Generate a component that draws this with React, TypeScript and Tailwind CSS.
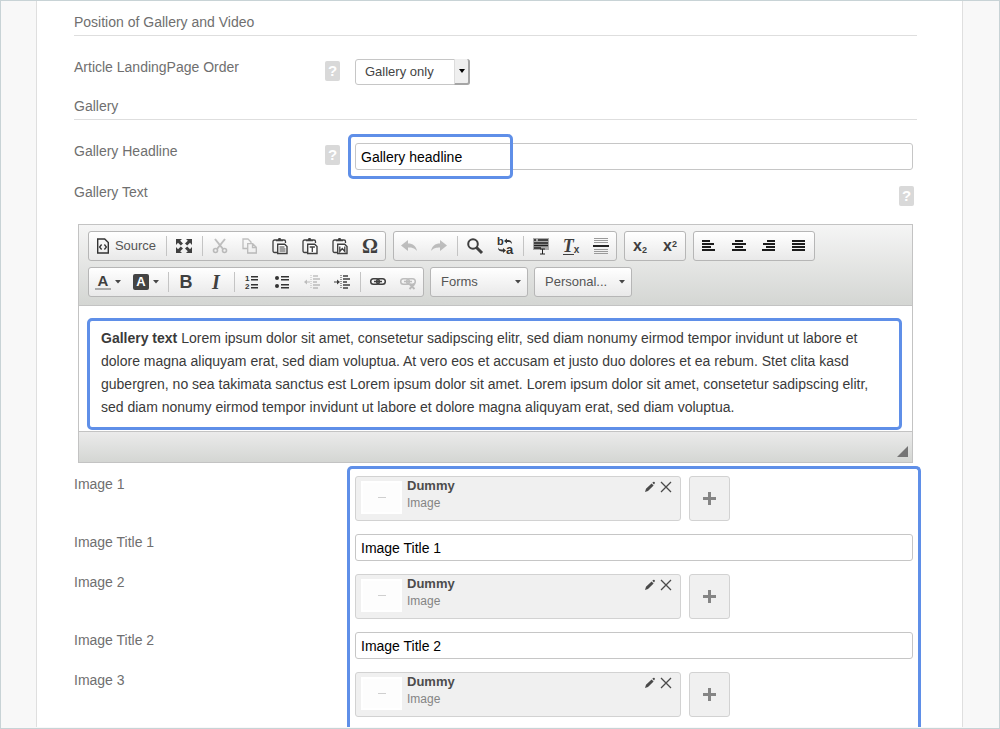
// src/App.tsx
import type { ReactNode } from 'react';

interface ToolButtonProps {
  label: string;
  children: ReactNode;
  disabled?: boolean;
  className?: string;
}

function ToolButton({ label, children, disabled, className = 'w-[30px]' }: ToolButtonProps) {
  return (
    <button
      type="button"
      title={label}
      aria-label={label}
      disabled={disabled}
      className={`flex h-7 shrink-0 items-center justify-center text-[#3f3f3f] disabled:opacity-30 ${className}`}
    >
      {children}
    </button>
  );
}

function ToolGroup({ children }: { children: ReactNode }) {
  return (
    <div className="flex rounded-[3px] border border-[#b6b6b6] bg-linear-to-b from-white to-[#e9e9e9]">
      {children}
    </div>
  );
}

function Separator() {
  return (
    <span className="flex w-[6px] items-center justify-center">
      <span className="h-5 w-px bg-[#c4c4c4]" />
    </span>
  );
}

function Icon({ children }: { children: ReactNode }) {
  return (
    <svg width="18" height="18" viewBox="0 0 18 18" fill="none" stroke="currentColor" aria-hidden="true">
      {children}
    </svg>
  );
}

function Caret() {
  return (
    <svg width="6" height="4" viewBox="0 0 6 4" fill="#474747" aria-hidden="true">
      <path d="M0 0h6L3 3.5z" />
    </svg>
  );
}

// Clipboard shared by the three paste buttons
function Clipboard({ children }: { children: ReactNode }) {
  return (
    <Icon>
      <path d="M6 15.500H3.500a1.500 1.500 0 0 1-1.500-1.500V4.500A1.500 1.500 0 0 1 3.500 3H5M12 3h1a1.500 1.500 0 0 1 1.500 1.500V6" strokeWidth="1.300" />
      <path d="M5 2.200h2L7.500 1h2L10 2.200h2v2H5z" fill="currentColor" stroke="none" />
      <path d="M6.700 7.200h7l2.300 2.300v7H6.700z" fill="#fff" strokeWidth="1.400" />
      {children}
    </Icon>
  );
}

type Bar = [number, number];

function AlignIcon({ bars }: { bars: Bar[] }) {
  return (
    <svg width="14" height="14" viewBox="0 0 14 14" fill="#1c1c1c" aria-hidden="true">
      {bars.map(([x, width], i) => (
        <rect key={i} x={x} y={1 + i * 3} width={width} height="2" />
      ))}
    </svg>
  );
}

const alignments: { label: string; bars: Bar[] }[] = [
  { label: 'Align Left', bars: [[0, 8], [0, 12], [0, 9], [0, 13]] },
  { label: 'Center', bars: [[3, 8], [0, 14], [3, 8], [0, 14]] },
  { label: 'Align Right', bars: [[5, 8], [1, 12], [4, 9], [0, 13]] },
  { label: 'Justify', bars: [[0, 13], [0, 13], [0, 13], [0, 13]] },
];

function IndentIcon({ outdent = false }: { outdent?: boolean }) {
  return (
    <Icon>
      <path d="M10 3h5M10 6h7M10 9h4M10 12h7M10 15h5" strokeWidth="1.500" />
      <path d="M8 2v14" strokeDasharray="1 1" />
      {outdent ? (
        <path d="M1 9l3-2.500v2h3v1H4v2z" fill="currentColor" stroke="none" />
      ) : (
        <path d="M7 9L4 6.500v2H1v1h3v2z" fill="currentColor" stroke="none" />
      )}
    </Icon>
  );
}

function LinkIcon({ broken = false }: { broken?: boolean }) {
  return (
    <Icon>
      <rect x="1.700" y="5.700" width="8.600" height="5.600" rx="2.800" strokeWidth="1.500" />
      <rect x="7.700" y="5.700" width="8.600" height="5.600" rx="2.800" strokeWidth="1.500" />
      <path d="M5 8.500h8" strokeWidth="1.500" />
      {broken && <path d="M10.500 11l5 5M15.500 11l-5 5" strokeWidth="1.800" />}
    </Icon>
  );
}

function Toolbar() {
  return (
    <div className="flex flex-col gap-[6px] border-b border-[#c3c3c3] bg-linear-to-b from-[#f5f5f5] to-[#d4d6d3] px-[9px] pt-[6px] pb-2">
      <div className="flex flex-wrap gap-[7px]">
        <ToolGroup>
          <ToolButton label="Source" className="w-[74px] gap-[5px]">
            <svg width="14" height="16" viewBox="0 0 14 16" fill="none" stroke="#333" aria-hidden="true">
              <path d="M1.700 1h7l3.600 3.600V15H1.700z" strokeWidth="1.400" />
              <path d="M5.600 6.500L3.600 9l2 2.500M8.400 6.500l2 2.500-2 2.500" strokeWidth="1.300" />
            </svg>
            <span className="text-[13px] text-[#555]">Source</span>
          </ToolButton>
          <Separator />
          <ToolButton label="Maximize">
            <Icon>
              <path d="M1 2h6L5.200 3.800 8 6.500 5.800 8.500 3 5.800 1 8zM17 2v6l-2-2.200-2.800 2.700L10 6.500l2.800-2.700L11 2zM1 16v-6l2 2.200 2.800-2.700L8 11.500l-2.800 2.700L7 16zM17 16h-6l1.800-1.800L10 11.500l2.200-2 2.800 2.700 2-2.200z" fill="currentColor" stroke="none" />
            </Icon>
          </ToolButton>
          <Separator />
          <ToolButton label="Cut" disabled>
            <Icon>
              <path d="M4 2l8 10M14 2L6 12" strokeWidth="2" />
              <circle cx="4.500" cy="13.500" r="2" strokeWidth="1.600" />
              <circle cx="13.500" cy="13.500" r="2" strokeWidth="1.600" />
            </Icon>
          </ToolButton>
          <ToolButton label="Copy" disabled>
            <Icon>
              <path d="M6 11.500H2V2h5l3 3v1" strokeWidth="1.300" />
              <path d="M6.700 6.700h5l3.600 3.600V16H6.700zM11.500 7v3.500H15" strokeWidth="1.300" />
            </Icon>
          </ToolButton>
          <ToolButton label="Paste">
            <Clipboard>
              <path d="M8.500 10h5M8.500 12h6M8.500 14h6" />
            </Clipboard>
          </ToolButton>
          <ToolButton label="Paste as plain text">
            <Clipboard>
              <path d="M8.700 10h5.200M11.300 10v5" strokeWidth="1.300" />
            </Clipboard>
          </ToolButton>
          <ToolButton label="Paste from Word">
            <Clipboard>
              <path d="M8.800 9.500v5l2.500-3 2.500 3v-5" strokeWidth="1.300" />
            </Clipboard>
          </ToolButton>
          <ToolButton label="Insert Special Character">
            <span className="font-['Liberation_Serif',serif] text-xl leading-5 font-bold">Ω</span>
          </ToolButton>
        </ToolGroup>

        <ToolGroup>
          <ToolButton label="Undo" disabled>
            <Icon>
              <path d="M1 8.500L8 3v3.500c5 0 8 2.500 9 7.500-2.500-3-5-3.500-9-3.500V14z" fill="currentColor" stroke="none" />
            </Icon>
          </ToolButton>
          <ToolButton label="Redo" disabled>
            <Icon>
              <path d="M17 8.500L10 3v3.500c-5 0-8 2.500-9 7.500 2.500-3 5-3.500 9-3.500V14z" fill="currentColor" stroke="none" />
            </Icon>
          </ToolButton>
          <Separator />
          <ToolButton label="Find">
            <Icon>
              <circle cx="7" cy="7" r="4.800" strokeWidth="2" />
              <path d="M10.500 10.500l5.500 5.500" strokeWidth="3" />
            </Icon>
          </ToolButton>
          <ToolButton label="Replace">
            <svg width="20" height="20" viewBox="0 0 20 20" fill="#333" fontFamily="Liberation Sans, sans-serif" fontWeight="bold" aria-hidden="true">
              <text x="2" y="9" fontSize="11">b</text>
              <text x="11" y="18" fontSize="13">a</text>
              <path d="M9 5l3-2.500V4c3 0 5 1 5 4-1.500-2-2.500-2-5-2v1.500zM11 14.500L8 12v1.500c-2.500 0-4 0-5-2 0 3 2 4 5 4V17z" />
            </svg>
          </ToolButton>
          <Separator />
          <ToolButton label="Select All">
            <Icon>
              <path d="M1 1h16v12H1z" fill="#aaa" stroke="none" />
              <path d="M2 3h2M6 3h10M2 6h14M2 8.500h14M2 11h7" stroke="#222" strokeWidth="1.600" />
              <path d="M8 12h5M8 17h5M10.500 12v5" stroke="#222" />
            </Icon>
          </ToolButton>
          <ToolButton label="Remove Format">
            <span className="flex items-end font-bold">
              <span className="border-b border-current font-['Liberation_Serif',serif] text-lg leading-4 italic">T</span>
              <span className="text-[10px] leading-[10px]">x</span>
            </span>
          </ToolButton>
          <ToolButton label="Insert Horizontal Line">
            <Icon>
              <path d="M2 1.500h14M2 3.500h14M2 5.500h14M2 12.500h14M2 14.500h14M2 16.500h14" stroke="#9a9a9a" />
              <path d="M1 9h16" stroke="#222" strokeWidth="2" />
            </Icon>
          </ToolButton>
        </ToolGroup>

        <ToolGroup>
          <ToolButton label="Subscript">
            <span className="text-base font-bold">
              x<sub className="text-[9px]">2</sub>
            </span>
          </ToolButton>
          <ToolButton label="Superscript">
            <span className="text-base font-bold">
              x<sup className="text-[9px]">2</sup>
            </span>
          </ToolButton>
        </ToolGroup>

        <ToolGroup>
          {alignments.map(({ label, bars }) => (
            <ToolButton key={label} label={label}>
              <AlignIcon bars={bars} />
            </ToolButton>
          ))}
        </ToolGroup>
      </div>

      <div className="flex flex-wrap gap-[6px]">
        <ToolGroup>
          <ToolButton label="Text Color" className="w-[38px] gap-1">
            <span className="w-4 border-b-2 border-[#aaa] text-center text-[15px] leading-[14px] font-bold">A</span>
            <Caret />
          </ToolButton>
          <ToolButton label="Background Color" className="w-[38px] gap-1">
            <span className="w-4 rounded-xs bg-[#444] text-center text-[13px] leading-4 font-bold text-white">A</span>
            <Caret />
          </ToolButton>
          <Separator />
          <ToolButton label="Bold">
            <span className="text-lg font-bold">B</span>
          </ToolButton>
          <ToolButton label="Italic">
            <span className="font-['Liberation_Serif',serif] text-xl font-bold italic">I</span>
          </ToolButton>
          <Separator />
          <ToolButton label="Numbered List">
            <svg width="18" height="18" viewBox="0 0 18 18" fill="#333" fontFamily="Liberation Sans, sans-serif" fontSize="8" fontWeight="bold" aria-hidden="true">
              <text x="2" y="8">1</text>
              <text x="2" y="16">2</text>
              <path d="M8 3h7v1.500H8zM8 6h7v1.500H8zM8 11h7v1.500H8zM8 14h7v1.500H8z" />
            </svg>
          </ToolButton>
          <ToolButton label="Bulleted List">
            <svg width="18" height="18" viewBox="0 0 18 18" fill="#333" aria-hidden="true">
              <circle cx="4" cy="5" r="2" />
              <circle cx="4" cy="13" r="2" />
              <path d="M8 3h8v1.500H8zM8 6h8v1.500H8zM8 11h8v1.500H8zM8 14h8v1.500H8z" />
            </svg>
          </ToolButton>
          <ToolButton label="Decrease Indent" disabled>
            <IndentIcon outdent />
          </ToolButton>
          <ToolButton label="Increase Indent">
            <IndentIcon />
          </ToolButton>
          <Separator />
          <ToolButton label="Link">
            <LinkIcon />
          </ToolButton>
          <ToolButton label="Unlink" disabled>
            <LinkIcon broken />
          </ToolButton>
        </ToolGroup>

        {['Forms', 'Personal...'].map((name) => (
          <ToolGroup key={name}>
            <button type="button" className="flex h-7 w-24 items-center justify-between pr-[6px] pl-[10px] text-[13px] text-[#555]">
              {name}
              <Caret />
            </button>
          </ToolGroup>
        ))}
      </div>
    </div>
  );
}

function HelpButton() {
  return (
    <button
      type="button"
      aria-label="Help"
      className="h-5 w-[15px] shrink-0 rounded-xs bg-[#d9d9d9] text-center text-[15px] leading-5 font-bold text-white"
    >
      ?
    </button>
  );
}

function SectionTitle({ children }: { children: ReactNode }) {
  return <h2 className="border-b border-[#dedede] pb-1 text-sm leading-[17px]">{children}</h2>;
}

interface FieldRowProps {
  id: string;
  label: string;
  help?: boolean;
  children: ReactNode;
}

function FieldRow({ id, label, help, children }: FieldRowProps) {
  return (
    <div className="flex pr-1">
      <div className="flex w-[281px] shrink-0 items-start justify-between pr-[15px]">
        <label htmlFor={id} className="text-sm leading-[17px]">
          {label}
        </label>
        {help && (
          <span className="flex pt-[2px]">
            <HelpButton />
          </span>
        )}
      </div>
      {children}
    </div>
  );
}

function TextInput({ id, value }: { id: string; value: string }) {
  return (
    <input
      id={id}
      type="text"
      defaultValue={value}
      className="h-[27px] w-full min-w-0 rounded-[3px] border border-[#c6c6c6] bg-white px-[5px] text-sm text-black outline-none"
    />
  );
}

function ImageCard({ id }: { id: string }) {
  return (
    <div className="flex h-[45px] min-w-0 gap-2">
      <div className="flex w-[326px] rounded-[3px] border border-[#d2d2d2] bg-[#f0f0f0] pt-1 pr-2 pl-[5px]">
        {/* Thumbnail */}
        <div className="flex h-[33px] w-[41px] items-center justify-center border-2 border-white bg-[#fdfdfd]">
          <span className="h-px w-2 bg-[#cfcfcf]" />
        </div>
        <div className="-mt-1 flex-1 pl-[5px]">
          <p className="text-[13px] leading-[17px] font-bold text-[#4c4c4c]">Dummy</p>
          <p className="text-xs leading-[19px] text-[#848484]">Image</p>
        </div>
        <div className="flex h-3 gap-1">
          <button type="button" aria-label="Edit">
            <svg width="12" height="12" viewBox="0 0 12 12" fill="#4a4a4a" aria-hidden="true">
              <path d="M1 11l1-3.200 5.600-5.400 2 2L4 10zM8.300 1.800l.9-.8q.8-.5 1.400.1t.1 1.400l-.7.900z" />
            </svg>
          </button>
          <button type="button" aria-label="Remove">
            <svg width="12" height="12" viewBox="0 0 12 12" stroke="#4a4a4a" strokeWidth="1.300" aria-hidden="true">
              <path d="M1 1l10 10M11 1L1 11" />
            </svg>
          </button>
        </div>
      </div>
      <button
        id={id}
        type="button"
        className="flex w-[41px] items-center justify-center rounded-[3px] border border-[#d2d2d2] bg-[#f0f0f0]"
      >
        <svg width="13" height="13" viewBox="0 0 13 13" stroke="#858585" strokeWidth="3" aria-hidden="true">
          <path d="M6.500 0v13M0 6.500h13" />
        </svg>
      </button>
    </div>
  );
}

// Blue marker drawn over the fields an editor has to fill in
const highlight = 'pointer-events-none absolute border-3 border-[#5f8fe8]';

export default function App() {
  return (
    <div className="min-h-screen border border-[#c8d3d6] bg-[#f8f8f8] pr-9 pl-[35px] font-['Liberation_Sans',Arial,sans-serif] text-[#6f6f6f]">
      <main className="border-x border-[#dfdfdf] bg-white pt-[13px] pr-[45px] pb-[10px] pl-[37px]">
        <SectionTitle>Position of Gallery and Video</SectionTitle>

        <div className="pt-[23px] pb-[13px]">
          <FieldRow id="order" label="Article LandingPage Order" help>
            <div className="relative h-[26px] w-[115px]">
              <select
                id="order"
                className="h-full w-full appearance-none rounded-[3px] border border-[#c6c6c6] bg-white pl-[9px] text-[13px] text-[#444]"
              >
                <option>Gallery only</option>
              </select>
              <span className="pointer-events-none absolute inset-y-0 right-0 flex w-4 items-center justify-center rounded-r-[3px] border-r-2 border-b-2 border-l border-[#a5a5a5] border-l-[#dcdcdc] bg-[#efefef]">
                <svg width="6" height="4" viewBox="0 0 6 4" fill="#000" aria-hidden="true">
                  <path d="M0 0h6L3 4z" />
                </svg>
              </span>
            </div>
          </FieldRow>
        </div>

        <SectionTitle>Gallery</SectionTitle>

        <div className="relative pt-[23px]">
          <FieldRow id="headline" label="Gallery Headline" help>
            <TextInput id="headline" value="Gallery headline" />
          </FieldRow>
          <div className={`${highlight} top-[14px] left-[274px] h-[45px] w-[165px] rounded-[5px]`} />
        </div>

        <div className="flex justify-between pt-[14px] pr-[3px] pb-[18px]">
          <span id="text-label" className="text-sm leading-[17px]">
            Gallery Text
          </span>
          <span className="flex pt-[2px]">
            <HelpButton />
          </span>
        </div>

        {/* Rich text editor */}
        <div className="mx-1 border border-[#c3c3c3]">
          <Toolbar />
          <div className="px-2 pt-3 pb-px">
            <div
              role="textbox"
              aria-multiline="true"
              aria-labelledby="text-label"
              contentEditable
              suppressContentEditableWarning
              spellCheck={false}
              className="mr-[2px] rounded-[5px] border-3 border-[#5f8fe8] px-[11px] pt-[6px] pb-2 text-sm leading-[23px] text-[#3a3a3a] outline-none"
            >
              <strong>Gallery text</strong> Lorem ipsum dolor sit amet, consetetur sadipscing elitr, sed diam nonumy
              eirmod tempor invidunt ut labore et dolore magna aliquyam erat, sed diam voluptua. At vero eos et accusam
              et justo duo dolores et ea rebum. Stet clita kasd gubergren, no sea takimata sanctus est Lorem ipsum dolor
              sit amet. Lorem ipsum dolor sit amet, consetetur sadipscing elitr, sed diam nonumy eirmod tempor invidunt
              ut labore et dolore magna aliquyam erat, sed diam voluptua.
            </div>
          </div>
          <div className="flex h-[31px] items-end justify-end border-t border-[#c3c3c3] bg-linear-to-b from-[#ebebeb] to-[#d4d6d3] pr-1 pb-[5px]">
            <svg width="11" height="11" viewBox="0 0 11 11" fill="#757575" aria-hidden="true">
              <path d="M11 0v11H0z" />
            </svg>
          </div>
        </div>

        {/* Gallery images */}
        <div className="relative flex flex-col gap-[13px] pt-[13px]">
          <FieldRow id="image-1" label="Image 1">
            <ImageCard id="image-1" />
          </FieldRow>
          <FieldRow id="title-1" label="Image Title 1">
            <TextInput id="title-1" value="Image Title 1" />
          </FieldRow>
          <FieldRow id="image-2" label="Image 2">
            <ImageCard id="image-2" />
          </FieldRow>
          <FieldRow id="title-2" label="Image Title 2">
            <TextInput id="title-2" value="Image Title 2" />
          </FieldRow>
          <FieldRow id="image-3" label="Image 3">
            <ImageCard id="image-3" />
          </FieldRow>
          <div className={`${highlight} top-[3px] -right-1 -bottom-[10px] left-[273px] rounded-t-[5px] border-b-0`} />
        </div>
      </main>
    </div>
  );
}
